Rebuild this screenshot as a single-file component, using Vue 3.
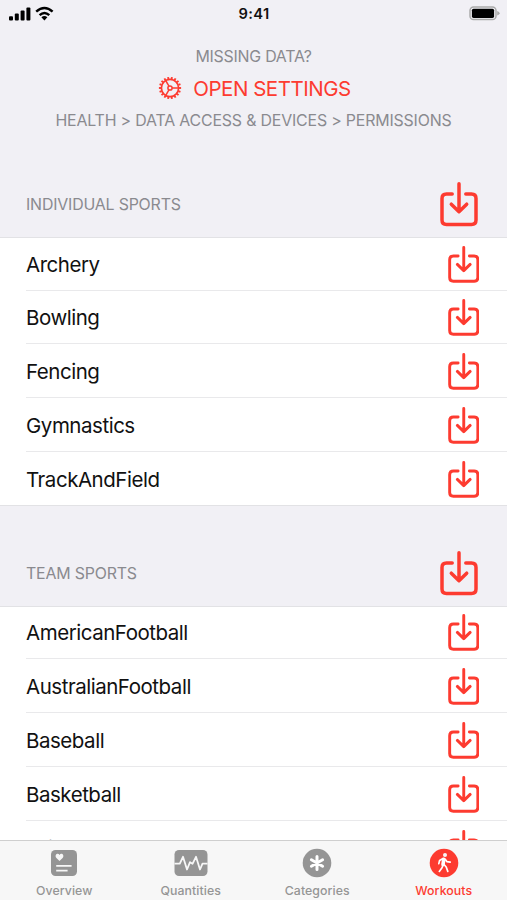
<script setup>
const sections = [
  { title: 'INDIVIDUAL SPORTS', rows: ['Archery', 'Bowling', 'Fencing', 'Gymnastics', 'TrackAndField'] },
  { title: 'TEAM SPORTS', rows: ['AmericanFootball', 'AustralianFootball', 'Baseball', 'Basketball', 'Cricket'] },
]
const teeth = Array.from({ length: 18 }, (_, i) => i * 20)
const spokes = [0, 120, 240]
</script>

<template>
  <div class="screen">
    <header class="status">
      <svg class="signal" width="46" height="16" viewBox="0 0 46 16">
        <rect x="0" y="10.2" width="4" height="4.2" rx="1" />
        <rect x="5.8" y="7.6" width="4" height="6.8" rx="1" />
        <rect x="11.6" y="4.6" width="4" height="9.8" rx="1" />
        <rect x="17.4" y="1.4" width="4" height="13" rx="1" />
        <path class="arc" d="M27.2 5.6Q35.4 -1.6 43.6 5.6M30.6 9.1Q35.4 4.8 40.3 9.1" />
        <path d="M32.4 11.2Q35.4 8.7 38.4 11.2L35.4 14.4Z" />
      </svg>
      <span class="time">9:41</span>
      <svg class="battery" width="32" height="16" viewBox="0 0 32 16">
        <rect class="shell" x="1" y="1" width="26" height="12.6" rx="3.6" />
        <rect x="2.9" y="2.7" width="22.2" height="9.2" rx="1.6" />
        <path class="tip" d="M28.2 5Q30.6 5.8 30.6 7.3Q30.6 8.8 28.2 9.6Z" />
      </svg>
    </header>

    <div class="intro">
      <p class="missing">MISSING DATA?</p>
      <button class="open">
        <svg width="24" height="24" viewBox="-12 -12 24 24">
          <circle r="8.6" />
          <circle r="2.1" class="fine" />
          <line v-for="a in teeth" :key="a" class="tooth" x1="9" x2="11.1" y1="0" y2="0" :transform="`rotate(${a})`" />
          <line v-for="a in spokes" :key="'s' + a" class="fine" x1="2.1" x2="8.8" y1="0" y2="0" :transform="`rotate(${a})`" />
        </svg>
        <span>OPEN SETTINGS</span>
      </button>
      <p class="path">HEALTH &gt; DATA ACCESS &amp; DEVICES &gt; PERMISSIONS</p>
    </div>

    <main class="lists">
      <section v-for="s in sections" :key="s.title">
        <div class="heading">
          <h2>{{ s.title }}</h2>
          <svg class="save large" viewBox="0 0 38 45">
            <path d="M12.2 12H6.5Q2 12 2 16.5V38Q2 42.5 6.5 42.5H31.5Q36 42.5 36 38V16.5Q36 12 31.5 12H25.8M19 1.8V29.5M11.3 22.2L19 29.7L26.7 22.2" />
          </svg>
        </div>
        <ul>
          <li v-for="r in s.rows" :key="r">
            <div class="row">
              <span>{{ r }}</span>
              <svg class="save" viewBox="0 0 38 45">
                <path d="M12.2 12H6.5Q2 12 2 16.5V38Q2 42.5 6.5 42.5H31.5Q36 42.5 36 38V16.5Q36 12 31.5 12H25.8M19 1.8V29.5M11.3 22.2L19 29.7L26.7 22.2" />
              </svg>
            </div>
          </li>
        </ul>
      </section>
    </main>

    <nav class="tabs">
      <div class="tab">
        <svg width="30" height="30" viewBox="0 0 30 30">
          <rect x="2" y="2" width="26" height="26" rx="4.5" />
          <path class="cut" d="M10.5 13L7.4 10C5 7.2 8.8 4.1 10.5 7C12.2 4.1 16 7.2 13.6 10Z" />
          <path class="line" d="M7.2 17.8H22.6M7.2 22.6H18.6" />
        </svg>
        <span>Overview</span>
      </div>
      <div class="tab">
        <svg width="34" height="30" viewBox="0 0 34 30">
          <rect x="0.5" y="2" width="33" height="26" rx="4.5" />
          <path class="line" d="M0.5 15.7H5.8L9 8.8L13 21.5L16 14.2L18.5 15.8L22 8.8L26 21.5L28.5 15.7H33.5" />
        </svg>
        <span>Quantities</span>
      </div>
      <div class="tab">
        <svg width="30" height="30" viewBox="0 0 30 30">
          <circle cx="15" cy="15" r="14.3" />
          <path class="star" d="M15 8.6V21.4M9.4 11.8L20.6 18.2M9.4 18.2L20.6 11.8" />
        </svg>
        <span>Categories</span>
      </div>
      <div class="tab active">
        <svg width="30" height="30" viewBox="0 0 30 30">
          <circle cx="15" cy="15" r="14.3" />
          <circle class="cut" cx="16" cy="6.9" r="2" />
          <path class="torso" d="M14.8 11.2L14 16.5" />
          <path class="limb" d="M14 10.5L10.6 12.5L9.8 15.6M16.2 11.3L17.8 13.6L21.2 14.2M14.2 16.8L13 19.8L10.3 23.4M14.8 16.3L17.2 19L18.8 23.4" />
        </svg>
        <span>Workouts</span>
      </div>
    </nav>
  </div>
</template>

<style>
body { background: #f1f0f5; overflow: hidden; }
</style>

<style scoped>
* { box-sizing: border-box; }
.screen {
  width: 507px; height: 900px; overflow: hidden;
  display: flex; flex-direction: column;
  background: #f1f0f5; color: #111;
  font-family: Inter, "Liberation Sans", sans-serif;
}
.status {
  height: 27px; flex: none; padding: 0 6px 0 9px;
  display: grid; grid-template-columns: 1fr auto 1fr; align-items: center;
}
.signal .arc { fill: none; stroke: #000; stroke-width: 2.5; }
.time { padding-right: 2px; font-size: 14.7px; font-weight: 600; letter-spacing: 0.3px; }
.battery { justify-self: end; }
.shell { fill: none; stroke: #aaa; stroke-width: 1.5; }
.tip { fill: #aaa; }
.intro {
  height: 110px; flex: none; padding-top: 20px;
  display: flex; flex-direction: column; align-items: center;
  color: #8a8a8f;
}
p { margin: 0; font-size: 15.9px; line-height: 20px; white-space: nowrap; }
.missing { letter-spacing: -0.23px; }
.path { letter-spacing: -0.17px; }
.open {
  height: 44px; padding: 0 0 2px 2px; border: 0; background: none;
  display: flex; align-items: center; gap: 11px;
  color: #fd3b30; font: 20.5px Inter, "Liberation Sans", sans-serif; letter-spacing: -0.48px;
}
.open svg { fill: none; stroke: currentColor; stroke-width: 1.7; }
.open .fine { stroke-width: 1.5; }
.open .tooth { stroke-width: 1.9; }
.lists { flex: 1; min-height: 0; overflow: hidden; }
.heading {
  height: 99.8px; padding: 36px 29px 0 26px;
  display: flex; align-items: center; justify-content: space-between;
}
h2 { margin: 0; font-size: 15.9px; font-weight: 400; color: #8a8a8f; letter-spacing: -0.18px; }
.save {
  width: 31.5px; height: 37.3px; flex: none; fill: none;
  stroke: #fd3b30; stroke-width: 3.5; stroke-linecap: round; stroke-linejoin: round;
}
.save.large { width: 38px; height: 45px; }
ul {
  margin: 0; padding: 0 0 0 26px; list-style: none; background: #fff;
  box-shadow: inset 0 1px #e2e2e5, inset 0 -1px #e2e2e5;
}
li { height: 53.8px; border-bottom: 1px solid #e9e9eb; }
li:last-child { border-bottom-color: transparent; }
.row {
  height: 53.8px; padding: 1px 28px 0 0;
  display: flex; align-items: center; justify-content: space-between;
  font-size: 20.5px; letter-spacing: -0.47px;
}
.tabs {
  height: 60px; flex: none; border-top: 1px solid #cfcfcf; background: #f7f7f7;
  padding-left: 1px;
  display: grid; grid-template-columns: repeat(4, 1fr);
}
.tab {
  padding-top: 7px; display: flex; flex-direction: column; align-items: center;
  color: #959595; font-size: 12.3px; line-height: 16px; font-weight: 500; letter-spacing: 0.08px;
}
.tab svg { fill: currentColor; margin-bottom: 5px; }
.tab.active { color: #fd3b30; }
.tab .cut { fill: #f7f7f7; }
.tab .line { fill: none; stroke: #f7f7f7; stroke-width: 1.8; stroke-linejoin: round; }
.star { stroke: #fff; stroke-width: 3; stroke-linecap: round; }
.torso { fill: none; stroke: #fff; stroke-width: 3.6; stroke-linecap: round; }
.limb { fill: none; stroke: #fff; stroke-width: 1.7; stroke-linecap: round; stroke-linejoin: round; }
</style>
